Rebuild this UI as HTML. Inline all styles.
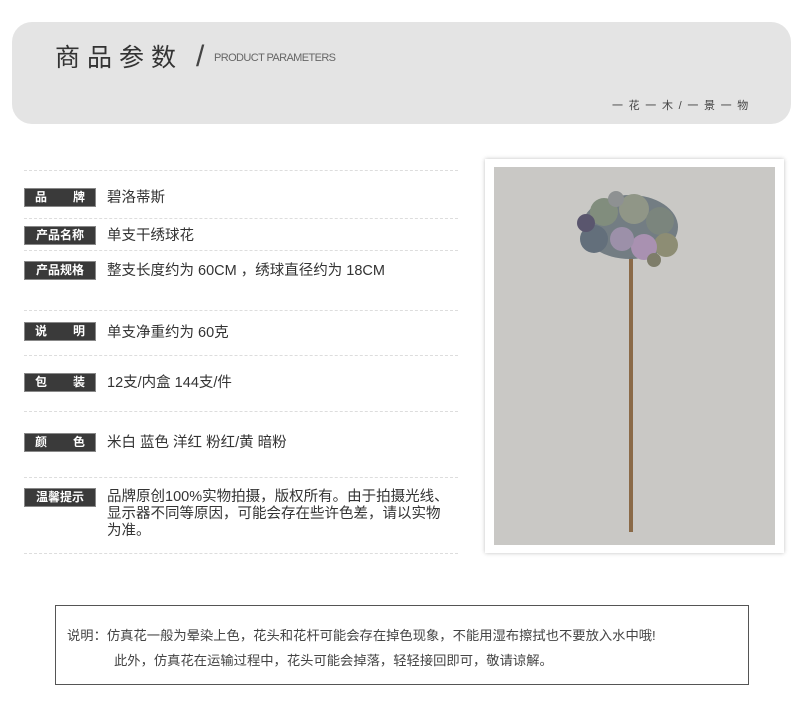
<!DOCTYPE html>
<html><head><meta charset="utf-8"><style>
*{margin:0;padding:0;box-sizing:border-box}
body{width:800px;height:717px;background:#fff;position:relative;overflow:hidden;font-family:"Liberation Sans","Noto Sans CJK SC",sans-serif;color:#333}
.hdr{position:absolute;left:12px;top:22px;width:779px;height:102px;background:#e4e4e4;border-radius:20px}
.t{position:absolute;left:55px;top:38px;font-size:25px;letter-spacing:7px;color:#333;font-weight:400}
.sl{position:absolute;left:196px;top:40px;font-size:30px;color:#444;font-weight:300}
.en{position:absolute;left:214px;top:52px;font-size:11px;color:#666;letter-spacing:-0.6px}
.sub{position:absolute;left:612px;top:97px;font-size:11px;color:#444;letter-spacing:1.3px;white-space:pre}
.dl{position:absolute;left:24px;width:434px;border-top:1px dashed #ddd}
.lb{position:absolute;left:24px;width:72px;height:19px;background:#3a3a3a;border:1px solid #888;color:#fff;font-size:12px;font-weight:bold;line-height:17px;text-align:center}
.sp{display:flex;justify-content:space-between;padding:0 10px}
.v{position:absolute;left:107px;font-size:14.5px;color:#333;line-height:17px;white-space:nowrap}
.pic{position:absolute;left:485px;top:159px;width:299px;height:394px;background:#fff;box-shadow:0 0 4px rgba(0,0,0,.25)}
.ph{position:absolute;left:9px;top:8px;width:281px;height:378px;background:#c9c8c5}
.nb{position:absolute;left:55px;top:605px;width:694px;height:80px;border:1px solid #555;font-size:13.3px;color:#444}
</style></head><body>
<div class="hdr"></div>
<div class="t">商品参数</div>
<div class="sl">/</div>
<div class="en">PRODUCT PARAMETERS</div>
<div class="sub">一 花 一 木 / 一 景 一 物</div>

<div class="dl" style="top:170px"></div>
<div class="dl" style="top:218px"></div>
<div class="dl" style="top:250px"></div>
<div class="dl" style="top:310px"></div>
<div class="dl" style="top:355px"></div>
<div class="dl" style="top:411px"></div>
<div class="dl" style="top:477px"></div>
<div class="dl" style="top:553px"></div>

<div class="lb sp" style="top:188px"><span>品</span><span>牌</span></div>
<div class="v" style="top:190px">碧洛蒂斯</div>
<div class="lb" style="top:226px">产品名称</div>
<div class="v" style="top:228px">单支干绣球花</div>
<div class="lb" style="top:261px">产品规格</div>
<div class="v" style="top:263px">整支长度约为 60CM ，绣球直径约为 18CM</div>
<div class="lb sp" style="top:322px"><span>说</span><span>明</span></div>
<div class="v" style="top:325px">单支净重约为 60克</div>
<div class="lb sp" style="top:373px"><span>包</span><span>装</span></div>
<div class="v" style="top:375px">12支/内盒 144支/件</div>
<div class="lb sp" style="top:433px"><span>颜</span><span>色</span></div>
<div class="v" style="top:435px">米白 蓝色 洋红 粉红/黄 暗粉</div>
<div class="lb" style="top:488px">温馨提示</div>
<div class="v" style="top:489px">品牌原创100%实物拍摄，版权所有。由于拍摄光线、<br>显示器不同等原因，可能会存在些许色差，请以实物<br>为准。</div>

<div class="pic"><div class="ph">
<svg width="281" height="378" viewBox="0 0 281 378">
<rect x="135" y="90" width="4" height="275" fill="#8a6a48"/>
<g opacity="0.95">
<ellipse cx="136" cy="60" rx="48" ry="32" fill="#6f7a80"/>
<circle cx="100" cy="72" r="14" fill="#5e6b78"/>
<circle cx="110" cy="45" r="14" fill="#7e8a7a"/>
<circle cx="140" cy="42" r="15" fill="#8e9484"/>
<circle cx="166" cy="54" r="14" fill="#77827a"/>
<circle cx="172" cy="78" r="12" fill="#8a8a70"/>
<circle cx="150" cy="80" r="13" fill="#a88fb0"/>
<circle cx="128" cy="72" r="12" fill="#9a8ea8"/>
<circle cx="92" cy="56" r="9" fill="#55506a"/>
<circle cx="122" cy="32" r="8" fill="#8b8f90"/>
<circle cx="160" cy="93" r="7" fill="#7a7a66"/>
</g>
</svg>
</div></div>

<div class="nb">
<div style="position:absolute;left:11px;top:19px;white-space:nowrap">说明：仿真花一般为晕染上色，花头和花杆可能会存在掉色现象，不能用湿布擦拭也不要放入水中哦!</div>
<div style="position:absolute;left:58px;top:44px;white-space:nowrap">此外，仿真花在运输过程中，花头可能会掉落，轻轻接回即可，敬请谅解。</div>
</div>
</body></html>
